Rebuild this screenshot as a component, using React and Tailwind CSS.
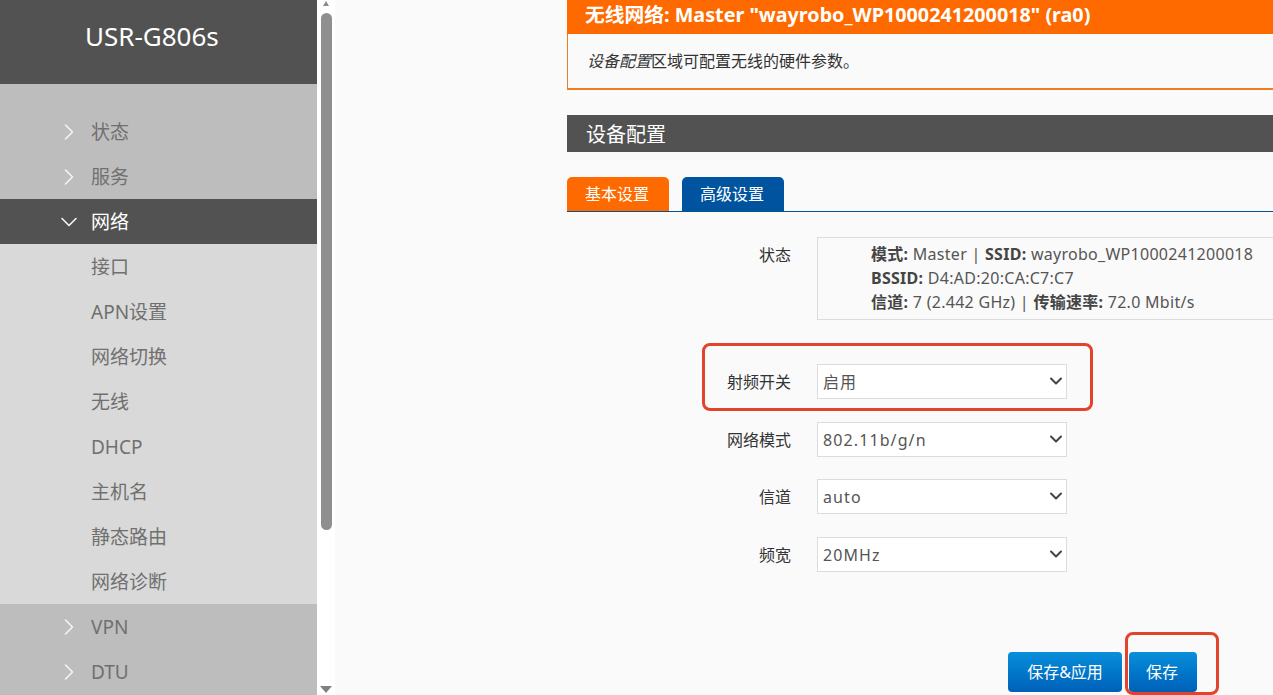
import React from 'react';
import { ChevronRight, ChevronDown } from 'lucide-react';

const groupsTop = ['状态', '服务'];
const subItems = ['接口', 'APN设置', '网络切换', '无线', 'DHCP', '主机名', '静态路由', '网络诊断'];
const groupsBottom = ['VPN', 'DTU'];

const fields = [
  { label: '射频开关', value: '启用', className: 'mt-[44px]' },
  { label: '网络模式', value: '802.11b/g/n', className: 'mt-[23px]' },
  { label: '信道', value: 'auto', className: 'mt-[22px]' },
  { label: '频宽', value: '20MHz', className: 'mt-[23px]' },
];

function MenuGroup({ label }) {
  return (
    <div className="flex h-[45px] items-center pl-[55px] pt-[2px] text-[19px] text-[#707070]">
      <ChevronRight className="-mt-[2px] h-[28px] w-[28px] text-[#f4f4f4]" strokeWidth={1.4} />
      <span className="ml-[8px]">{label}</span>
    </div>
  );
}

function SelectRow({ label, value, className }) {
  return (
    <div className={`flex items-center ${className}`}>
      <label className="w-[224px] text-right text-base text-[#333333]">{label}</label>
      <div className="relative ml-[26px] w-[250px]">
        <select
          defaultValue={value}
          className="h-[35px] w-full appearance-none border border-[#dcdcdc] bg-white pl-[5px] text-base tracking-[1.1px] text-[#555555] outline-none"
        >
          <option>{value}</option>
        </select>
        <ChevronDown className="pointer-events-none absolute right-[1px] top-[7px] h-[20px] w-[20px] text-[#444444]" strokeWidth={2.4} />
      </div>
    </div>
  );
}

export default function App() {
  return (
    <div className="flex h-[695px] w-[1273px] overflow-hidden bg-[#fafafa] font-['Noto_Sans','Noto_Sans_CJK_SC',sans-serif]">
      <aside className="flex w-[317px] shrink-0 flex-col bg-[#bdbdbd]">
        <div className="flex h-[84px] shrink-0 bg-[#525252] pl-[85px] pt-[17px] text-[26px] leading-[38px] text-white">
          USR-G806s
        </div>
        <nav className="pt-[25px]">
          {groupsTop.map((g) => (
            <MenuGroup key={g} label={g} />
          ))}
          <div className="flex h-[45px] items-center bg-[#525252] pl-[55px] pt-[2px] text-[19px] text-white">
            <ChevronDown className="-mt-[2px] h-[28px] w-[28px] text-[#f4f4f4]" strokeWidth={1.4} />
            <span className="ml-[8px]">网络</span>
          </div>
          <div className="bg-[#d9d9d9]">
            {subItems.map((s) => (
              <div key={s} className="flex h-[45px] items-center pl-[91px] pt-[2px] text-[19px] text-[#707070]">
                {s}
              </div>
            ))}
          </div>
          {groupsBottom.map((g) => (
            <MenuGroup key={g} label={g} />
          ))}
        </nav>
      </aside>

      {/* scrollbar */}
      <div className="flex w-[18px] shrink-0 flex-col items-center bg-white">
        <svg width="12" height="6" viewBox="0 0 12 6" className="shrink-0">
          <path d="M3 6 L6 1 L9 6 Z" fill="#8a8a8a" />
        </svg>
        <div className="mt-[7px] h-[517px] w-[11px] rounded-full bg-[#8f8f8f]" />
        <div className="flex-1" />
        <svg width="14" height="9" viewBox="0 0 14 9" className="mb-[1px] shrink-0">
          <path d="M1 1 H13 L7 8 Z" fill="#808080" />
        </svg>
      </div>

      <main className="relative min-w-0 flex-1 overflow-hidden pl-[232px] text-[#333333]">
        <div className="w-[800px]">
          <div className="border-b-2 border-l border-[#ee7d22]">
            <h2 className="-ml-px flex h-[34px] items-center bg-[#ff6a00] pb-[4px] pl-[18px] text-[19.75px] font-bold text-white">
              无线网络: Master "wayrobo_WP1000241200018" (ra0)
            </h2>
            <p className="flex h-[54px] items-center pl-[19px] text-base text-[#333333]">
              <em>设备配置</em>区域可配置无线的硬件参数。
            </p>
          </div>

          <h3 className="mt-[25px] flex h-[37px] items-center bg-[#525252] pl-[19px] pt-[2px] text-[20px] font-normal text-white">
            设备配置
          </h3>

          <div className="mt-[25px] flex h-[35px] gap-[13px] border-b border-[#00558f]">
            <div className="flex h-[34px] w-[102px] items-center justify-center rounded-t-[5px] bg-[#ff6a00] pr-[2px] text-base text-white">
              基本设置
            </div>
            <div className="flex h-[34px] w-[102px] items-center justify-center rounded-t-[5px] bg-[#00539f] pr-[2px] text-base text-white">
              高级设置
            </div>
          </div>

          <div className="mt-[25px] flex items-start">
            <div className="w-[224px] pt-[6px] text-right text-base">状态</div>
            <div className="ml-[26px] h-[83px] w-[500px] border border-[#dcdcdc] pl-[53px] pt-[4px] text-base leading-[24px] tracking-[0.28px] text-[#555555]">
              <div>
                <b className="text-[#444444]">模式:</b> Master | <b className="text-[#444444]">SSID:</b> wayrobo_WP1000241200018
              </div>
              <div>
                <b className="text-[#444444]">BSSID:</b> D4:AD:20:CA:C7:C7
              </div>
              <div>
                <b className="text-[#444444]">信道:</b> 7 (2.442 GHz) | <b className="text-[#444444]">传输速率:</b> 72.0 Mbit/s
              </div>
            </div>
          </div>

          {fields.map((f) => (
            <SelectRow key={f.label} {...f} />
          ))}

          <div className="mt-[80px] flex gap-[7px] pl-[441px]">
            <button className="h-[40px] w-[114px] rounded-[4px] bg-gradient-to-b from-[#0a8fdc] to-[#0060b8] text-base text-white">
              保存&amp;应用
            </button>
            <button className="h-[40px] w-[68px] rounded-[4px] bg-gradient-to-b from-[#0a8fdc] to-[#0060b8] pr-[2px] text-base text-white">
              保存
            </button>
          </div>
        </div>

        {/* red annotation boxes */}
        <div className="pointer-events-none absolute left-[367px] top-[343px] h-[68px] w-[391px] rounded-[8px] border-[3px] border-[#e2432a]" />
        <div className="pointer-events-none absolute left-[790px] top-[632px] h-[63px] w-[94px] rounded-[8px] border-[3px] border-[#e2432a]" />
      </main>
    </div>
  );
}
